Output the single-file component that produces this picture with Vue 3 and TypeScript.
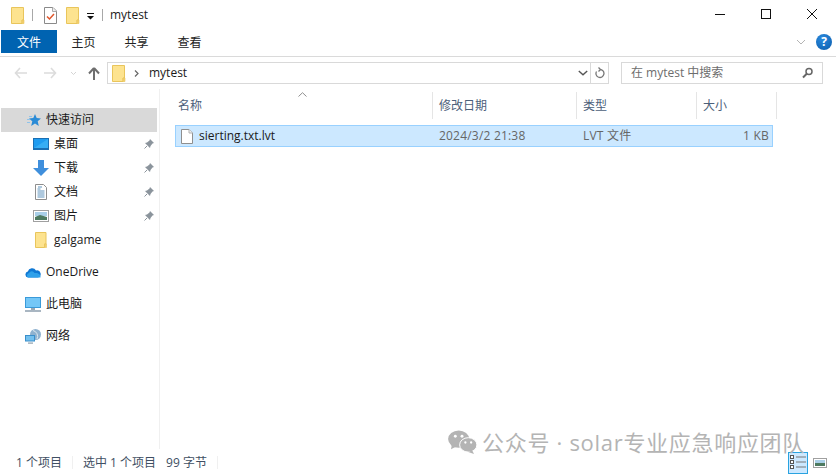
<script setup lang="ts">
interface NavItem { label: string; icon: string; pin?: boolean }
const quick: NavItem[] = [
  { label: '桌面', icon: 'desktop', pin: true },
  { label: '下载', icon: 'download', pin: true },
  { label: '文档', icon: 'doc', pin: true },
  { label: '图片', icon: 'pic', pin: true },
  { label: 'galgame', icon: 'folder' },
]
const tabs = ['主页', '共享', '查看']
</script>

<template>
  <div class="win">
    <header class="title">
      <svg width="14" height="17" viewBox="0 0 14 17"><path d="M.5.5h12v12.500h-1.500v3.500h-10.500z" fill="#fde38f" stroke="#e9c55b"/><path d="M11 13h2v3.500h-2z" fill="#f2d06f" stroke="#e9c55b" stroke-width=".6"/></svg>
      <i class="tsep"></i>
      <svg class="check" width="13" height="17" viewBox="0 0 13 17"><path d="M.5.500h8.500l3.500 3.500v12.500h-12z" fill="#fff" stroke="#8a8a8a"/><path d="M8.500.500v4h4" fill="#eee" stroke="#aaa"/><path d="M3 9.500l2.500 2.500 4.500-5" fill="none" stroke="#e0552a" stroke-width="1.500"/></svg>
      <svg class="t2" width="14" height="17" viewBox="0 0 14 17"><path d="M.5.5h12v12.500h-1.500v3.500h-10.500z" fill="#fde38f" stroke="#e9c55b"/><path d="M11 13h2v3.500h-2z" fill="#f2d06f" stroke="#e9c55b" stroke-width=".6"/></svg>
      <svg class="qa" width="7" height="7" viewBox="0 0 7 7"><path d="M0 0h7v1h-7zM0 3h7l-3.500 3.500z" fill="#111"/></svg>
      <i class="tsep s2"></i>
      <span class="tname">mytest</span>
      <div class="caption">
        <svg width="12" height="12" viewBox="0 0 12 12"><path d="M1 6.500h10" stroke="#111"/></svg>
        <svg width="12" height="12" viewBox="0 0 12 12"><rect x="1.500" y="1.500" width="9" height="9" fill="none" stroke="#111"/></svg>
        <svg width="12" height="12" viewBox="0 0 12 12"><path d="M1 1l10 10M11 1l-10 10" stroke="#111" stroke-width="1"/></svg>
      </div>
    </header>

    <nav class="ribbon">
      <div class="tab file">文件</div>
      <div v-for="t in tabs" :key="t" class="tab">{{ t }}</div>
      <div class="ribbon-right">
        <svg width="10" height="6" viewBox="0 0 10 6"><path d="M1 1l4 4 4-4" fill="none" stroke="#b4b4b4"/></svg>
        <span class="help">?</span>
      </div>
    </nav>

    <div class="addressbar">
      <svg class="n1" width="14" height="12" viewBox="0 0 14 12"><path d="M6 1L1.500 6 6 11M1.500 6H13" fill="none" stroke="#dcdcdc" stroke-width="1.600"/></svg>
      <svg class="n2" width="14" height="12" viewBox="0 0 14 12"><path d="M8 1l4.500 5L8 11M12.500 6H1" fill="none" stroke="#dcdcdc" stroke-width="1.600"/></svg>
      <svg class="n3" width="7" height="5" viewBox="0 0 7 5"><path d="M1 1l2.500 2.500L6 1" fill="none" stroke="#d4d4d4"/></svg>
      <svg class="n4" width="12" height="13" viewBox="0 0 12 13"><path d="M6 1L1 6.500M6 1l5 5.500M6 1.500V13" fill="none" stroke="#6e6e6e" stroke-width="2"/></svg>
      <div class="addr">
        <svg width="14" height="17" viewBox="0 0 14 17"><path d="M.5.5h12v12.500h-1.500v3.500h-10.500z" fill="#fde38f" stroke="#e9c55b"/><path d="M11 13h2v3.500h-2z" fill="#f2d06f" stroke="#e9c55b" stroke-width=".6"/></svg>
        <svg class="chev" width="5" height="7" viewBox="0 0 5 7"><path d="M1 .5l3 3-3 3" fill="none" stroke="#666" stroke-width="1.200"/></svg>
        <span class="path">mytest</span>
        <svg class="drop" width="10" height="6" viewBox="0 0 10 6"><path d="M.8 1l4.200 3.800L9.200 1" fill="none" stroke="#555" stroke-width="1.400"/></svg>
        <div class="refresh">
          <svg width="10" height="12" viewBox="0 0 10 12"><path d="M5 2.500a4 4 0 1 1-3.500 2M3.500 0.500l2 2-2 2" fill="none" stroke="#777" stroke-width="1.300"/></svg>
        </div>
      </div>
      <div class="search">
        <span>在 mytest 中搜索</span>
        <svg width="11" height="12" viewBox="0 0 11 12"><circle cx="7" cy="4.500" r="3" fill="none" stroke="#666" stroke-width="1.500"/><path d="M5 6.500L1 10.500" stroke="#666" stroke-width="2"/></svg>
      </div>
    </div>

    <main class="body">
      <aside class="side">
        <div class="row top selected">
          <svg width="14" height="13" viewBox="0 0 14 13"><path d="M8 0l1.700 4.100 4.300.3-3.300 2.800 1.100 4.800-3.800-2.500L4.200 12l1.100-4.800L2 4.400l4.300-.3z" fill="#2a8bd6"/><path d="M2 2.500h3M0 5.500h3M0 8.500h3" stroke="#8fc3ea"/></svg>
          <span>快速访问</span>
        </div>
        <div v-for="q in quick" :key="q.label" class="row sub">
          <span class="ic">
            <svg v-if="q.icon === 'desktop'" width="16" height="12" viewBox="0 0 16 12"><rect width="16" height="12" fill="#1a6fb4"/><rect x="1" y="1" width="14" height="9" fill="#1f9cf0"/><path d="M1 10L15 1v9z" fill="#36aef5"/></svg>
            <svg v-else-if="q.icon === 'download'" width="16" height="16" viewBox="0 0 16 16"><path d="M5 0h6v8h5l-8 8-8-8h5z" fill="#3f8fdc"/></svg>
            <svg v-else-if="q.icon === 'doc'" width="12" height="16" viewBox="0 0 12 16"><path d="M.5.500h8l3 3v12h-11z" fill="#fff" stroke="#8e8e8e"/><path d="M3 3h4M2.500 5h3M2.500 7h7M2.500 9h7M2.500 11h7M2.500 13h7" stroke="#5e93bd"/></svg>
            <svg v-else-if="q.icon === 'pic'" width="16" height="12" viewBox="0 0 16 12"><rect x=".5" y=".5" width="15" height="11" fill="#fff" stroke="#a0a0a0"/><rect x="2" y="2" width="12" height="4" fill="#a9cfe8"/><path d="M2 7l5-2 7 2v3H2z" fill="#4d7a60"/></svg>
            <svg v-else width="12" height="16" viewBox="0 0 12 16"><path d="M.5.500h10.500v11.500h-1.500v3.500h-9z" fill="#fde38f" stroke="#e9c55b"/><path d="M9.500 12h2v3.500h-2z" fill="#f2d06f" stroke="#e9c55b" stroke-width=".6"/></svg>
          </span>
          <span class="label">{{ q.label }}</span>
          <svg v-if="q.pin" class="pin" width="10" height="10" viewBox="0 0 10 10"><path d="M6 0l4 4-1.500.5L6.500 7l-.5 2L1 4l2-.5L5.500 1.500z" fill="#8b949c"/><path d="M3 7L.5 9.500" stroke="#8b949c"/></svg>
        </div>
        <div class="row top gap">
          <svg width="16" height="11" viewBox="0 0 16 11"><path d="M3 10.500a3 3 0 0 1-.2-5.900A4.500 4.500 0 0 1 11 3.500 3.500 3.500 0 0 1 13 10.500z" fill="#0f78d4"/><path d="M3 10.500a2.500 2.500 0 0 1 1-4.500 3 3 0 0 1 5.500 0c3-.5 6.500 1 6 4.500z" fill="#2ea0ea"/></svg>
          <span>OneDrive</span>
        </div>
        <div class="row top gap">
          <svg width="16" height="15" viewBox="0 0 16 15"><rect width="16" height="11" fill="#3a9ad9"/><rect x="1" y="1" width="14" height="9" fill="#74c7f7"/><rect x="6" y="11" width="4" height="2" fill="#9aa8b4"/><rect y="13" width="16" height="2" fill="#a9b6c2"/></svg>
          <span>此电脑</span>
        </div>
        <div class="row top gap">
          <svg width="16" height="15" viewBox="0 0 16 15"><circle cx="10.500" cy="5.500" r="5.500" fill="#8fb2cf"/><path d="M8 1.500a6 6 0 0 1 4 8.500" stroke="#dfe9f0" fill="none"/><rect y="6" width="10" height="6.500" fill="#3a8fcb"/><rect x="1" y="7" width="8" height="4.500" fill="#73c0ee"/><rect x="3" y="13.500" width="5" height="1.200" fill="#8fa0ad"/></svg>
          <span>网络</span>
        </div>
      </aside>

      <section class="list">
        <svg class="sort" width="9" height="5" viewBox="0 0 9 5"><path d="M.5 4.500l4-3.800 4 3.800" fill="none" stroke="#8f8f8f"/></svg>
        <div class="head">
          <div class="col c-name">名称</div>
          <div class="col c-date">修改日期</div>
          <div class="col c-type">类型</div>
          <div class="col c-size">大小</div>
        </div>
        <div class="file-row">
          <span class="cell c-name">
            <svg width="12" height="15" viewBox="0 0 12 15"><path d="M.5.500h7.500l3.500 3.500v10.500h-11z" fill="#fff" stroke="#8f8f8f"/><path d="M8 .5v3.500h3.500" fill="#f2f2f2" stroke="#b0b0b0"/></svg>
            <span class="fname">sierting.txt.lvt</span>
          </span>
          <span class="cell c-date dim">2024/3/2 21:38</span>
          <span class="cell c-type dim">LVT 文件</span>
          <span class="cell c-size dim">1 KB</span>
        </div>
      </section>
    </main>

    <footer class="status">
      <span>1 个项目</span><i></i>
      <span>选中 1 个项目</span><span class="bytes">99 字节</span><i></i>
      <div class="views">
        <span class="v active">
          <svg width="17" height="15" viewBox="0 0 17 15"><g fill="#fff" stroke="#555" stroke-width="1"><rect x=".5" y=".5" width="3" height="3"/><rect x=".5" y="5.500" width="3" height="3"/><rect x=".5" y="10.500" width="3" height="3"/></g><path d="M6 2h10M6 7h10M6 12h10" stroke="#777"/></svg>
        </span>
        <span class="v">
          <svg width="14" height="10" viewBox="0 0 14 10"><rect x=".5" y=".5" width="13" height="9" fill="#fff" stroke="#a0a0a0"/><rect x="2" y="2" width="10" height="3" fill="#a9cfe8"/><rect x="2" y="5" width="10" height="3" fill="#4d7a60"/></svg>
        </span>
      </div>
    </footer>

    <div class="mark">
      <svg width="31" height="24" viewBox="0 0 30 25"><ellipse cx="11" cy="9.500" rx="11" ry="9" fill="#b4b4b4"/><path d="M4 15l-1 5 6-3z" fill="#b4b4b4"/><ellipse cx="21" cy="15.500" rx="9" ry="7.500" fill="#b4b4b4" stroke="#fff"/><path d="M25 21l2 4-6-2z" fill="#b4b4b4"/><circle cx="7.500" cy="6.500" r="1.500" fill="#fff"/><circle cx="14.500" cy="6.500" r="1.500" fill="#fff"/><circle cx="18" cy="13" r="1.200" fill="#fff"/><circle cx="24" cy="13" r="1.200" fill="#fff"/></svg>
      <span>公众号 · solar专业应急响应团队</span>
    </div>
  </div>
</template>

<style>
html, body { margin: 0; background: #fff; }
</style>

<style scoped>
.win {
  width: 836px; height: 475px; position: relative; overflow: hidden; background: #fff;
  display: flex; flex-direction: column; color: #1a1a1a;
  font: 12px/16px "Open Sans", "Noto Sans CJK SC", sans-serif;
}
svg { display: block; flex: none; }
.title { height: 30px; display: flex; align-items: center; padding-left: 11px; box-sizing: border-box; flex: none; }
.tsep { width: 1px; height: 12px; background: #a8a8a8; margin-left: 7px; }
.check { margin-left: 11px; }
.t2 { margin-left: 9px; }
.qa { margin-left: 7px; margin-top: 3px; }
.s2 { margin-left: 8px; }
.tname { margin-left: 7px; }
.caption { margin-left: auto; display: flex; gap: 34px; padding-right: 18px; margin-top: -2px; }
.ribbon { height: 26px; flex: none; display: flex; padding-left: 1px; border-bottom: 1px solid #dadada; align-items: flex-start; }
.tab { width: 53px; height: 23px; line-height: 25px; text-align: center; color: #222; }
.tab.file { width: 56px; background: #0063b1; color: #fff; }
.ribbon-right { margin-left: auto; display: flex; align-items: center; gap: 10px; padding-right: 4px; margin-top: 4px; }
.help { width: 16px; height: 16px; border-radius: 50%; background: radial-gradient(circle at 40% 30%, #2a8ade, #0b5cab); color: #fff; font-weight: 700; font-size: 12px; line-height: 16px; text-align: center; }
.addressbar { height: 32px; flex: none; display: flex; align-items: center; padding-left: 14px; box-sizing: border-box; }
.n2 { margin-left: 15px; }
.n3 { margin-left: 13px; }
.n4 { margin-left: 11px; }
.addr { margin-left: 7px; width: 502px; height: 22px; box-sizing: border-box; border: 1px solid #d9d9d9; display: flex; align-items: center; padding-left: 4px; }
.chev { margin-left: 8px; }
.path { margin-left: 10px; }
.drop { margin-left: auto; margin-right: 2px; }
.refresh { width: 17px; height: 20px; border-left: 1px solid #d9d9d9; display: flex; align-items: center; justify-content: center; }
.search { margin-left: 12px; width: 202px; height: 22px; box-sizing: border-box; border: 1px solid #d9d9d9; display: flex; align-items: center; justify-content: space-between; padding: 0 9px; color: #6d6d6d; }
.body { flex: 1; display: flex; min-height: 0; }
.side { width: 158px; flex: none; border-right: 1px solid #f0f0f0; padding-top: 19px; padding-left: 1px; margin-bottom: 1px; }
.row { height: 24px; display: flex; align-items: center; }
.top { padding-left: 24px; gap: 5px; }
.selected { background: #d9d9d9; width: 156px; box-sizing: border-box; padding-left: 26px; gap: 5px; }
.sub { padding-left: 32px; width: 156px; box-sizing: border-box; }
.ic { width: 16px; display: flex; justify-content: center; }
.label { margin-left: 5px; }
.pin { margin-left: auto; margin-right: 3px; }
.gap { margin-top: 8px; }
.list { flex: 1; position: relative; padding-left: 15px; }
.sort { position: absolute; left: 138px; top: 3px; }
.head { display: flex; height: 27px; margin-top: 3px; }
.col { height: 27px; line-height: 27px; box-sizing: border-box; padding-left: 3px; border-right: 1px solid #e5e5e5; color: #4c607a; }
.c-name { width: 258px; }
.c-date { width: 144px; padding-left: 6px; }
.c-type { width: 120px; padding-left: 6px; }
.c-size { width: 80px; padding-left: 6px; }
.file-row { width: 598px; height: 22px; margin-top: 6px; background: #cce8ff; border: 1px solid #99d1ff; box-sizing: border-box; display: flex; align-items: center; }
.cell { display: flex; align-items: center; box-sizing: border-box; }
.file-row .c-name { width: 257px; padding-left: 5px; gap: 6px; }
.file-row .c-date { width: 144px; }
.file-row .c-type { width: 114px; }
.file-row .c-size { width: 81px; justify-content: flex-end; padding-right: 3px; }
.dim { color: #666; letter-spacing: .2px; }
.status { height: 25px; flex: none; display: flex; align-items: center; padding-left: 16px; color: #3f4f63; }
.status span:not(.v) { padding-top: 1px; }
.bytes { margin-left: 10px; }
.status i { width: 1px; height: 13px; background: #f0f0f0; margin: 0 10px; }
.views { margin-left: auto; display: flex; align-items: center; gap: 5px; padding-right: 9px; }
.v { display: flex; align-items: center; justify-content: center; }
.v.active { width: 20px; height: 22px; background: #cce8ff; border: 1px solid #29a3e0; box-sizing: border-box; }
.mark { position: absolute; left: 447px; top: 429px; display: flex; align-items: center; gap: 4px; color: #b4b4b4; font-size: 22px; line-height: 26px; letter-spacing: .7px; white-space: nowrap; }
</style>
